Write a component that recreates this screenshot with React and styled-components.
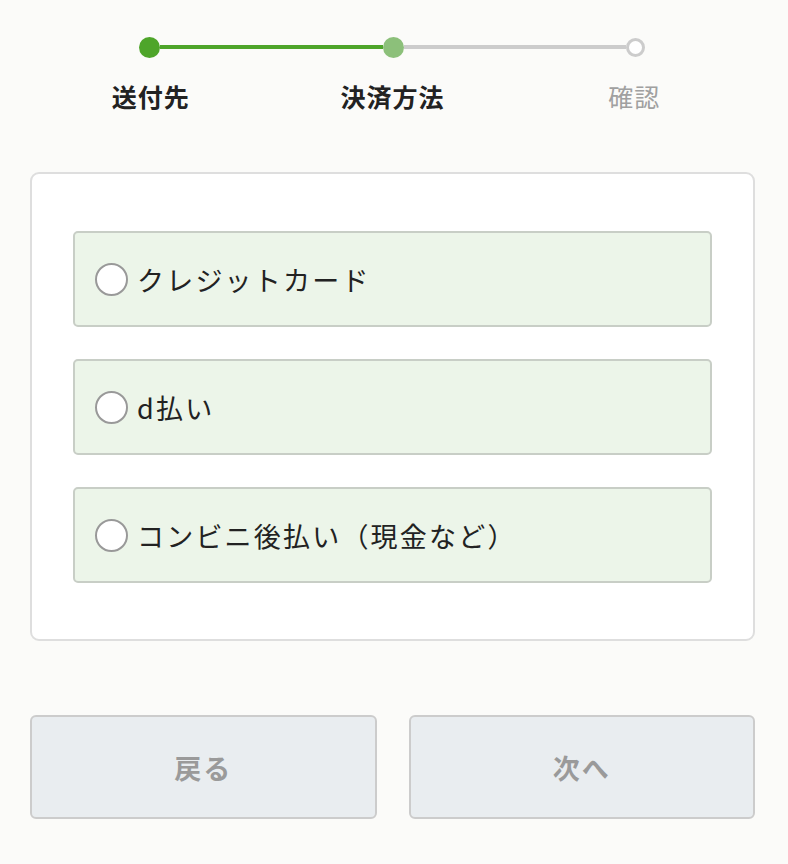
import React, { useState } from "react";
import styled, { createGlobalStyle } from "styled-components";

const GlobalStyle = createGlobalStyle`
  body {
    margin: 0;
    background: #fbfbf9;
    font-family: "Noto Sans CJK JP", "Noto Sans", sans-serif;
  }
`;

const StyledPage = styled.div`
  width: 725px;
  margin-left: 30px;
  padding-top: 36px;
  padding-bottom: 40px;
`;

const StyledTrack = styled.div`
  display: flex;
  align-items: center;
  padding: 0 110px 0 109px;
  height: 22px;
`;

const StyledDot = styled.span`
  flex: none;
  box-sizing: border-box;
  width: ${(p) => (p.$state === "todo" ? 19 : 21)}px;
  height: ${(p) => (p.$state === "todo" ? 19 : 21)}px;
  border-radius: 50%;
  background: ${(p) =>
    p.$state === "done" ? "#4ea52a" : p.$state === "current" ? "#8cc07a" : "#fff"};
  border: ${(p) => (p.$state === "todo" ? "3px solid #cccccc" : "none")};
`;

const StyledLine = styled.span`
  flex: 1;
  height: 4px;
  background: ${(p) => (p.$done ? "#4ea52a" : "#cccccc")};
`;

const StyledLabels = styled.div`
  display: grid;
  grid-template-columns: repeat(3, 1fr);
  margin-top: 23px;
`;

const StyledLabel = styled.div`
  text-align: center;
  font-size: 25px;
  line-height: 30px;
  font-weight: ${(p) => (p.$muted ? 400 : 700)};
  color: ${(p) => (p.$muted ? "#a0a0a0" : "#222")};
  letter-spacing: 1px;
`;

const StyledCard = styled.div`
  margin-top: 61px;
  background: #fff;
  border: 2px solid #dedede;
  border-radius: 9px;
  padding: 57px 41px 56px;
  display: flex;
  flex-direction: column;
  gap: 32px;
`;

const StyledOption = styled.label`
  display: flex;
  align-items: center;
  gap: 9px;
  height: 96px;
  box-sizing: border-box;
  padding-left: 20px;
  background: #ecf5e9;
  border: 2px solid #c8cec6;
  border-radius: 5px;
  font-size: 27px;
  color: #222;
  letter-spacing: 2.2px;
  cursor: pointer;
`;

const StyledRadio = styled.span`
  flex: none;
  box-sizing: border-box;
  width: 33px;
  height: 33px;
  border-radius: 50%;
  background: #fff;
  border: 2px solid ${(p) => (p.$checked ? "#4ea52a" : "#999")};
  display: flex;
  align-items: center;
  justify-content: center;
  &::after {
    content: "";
    width: 15px;
    height: 15px;
    border-radius: 50%;
    background: ${(p) => (p.$checked ? "#4ea52a" : "transparent")};
  }
`;

const StyledButtons = styled.div`
  margin-top: 74px;
  display: grid;
  grid-template-columns: 1fr 1fr;
  gap: 32px;
`;

const StyledButton = styled.button`
  height: 104px;
  background: #e9edf0;
  border: 2px solid #cccccc;
  border-radius: 6px;
  font-family: inherit;
  font-size: 27px;
  font-weight: 700;
  color: #9a9a9a;
  letter-spacing: 2px;
  cursor: pointer;
`;

const options = ["クレジットカード", "d払い", "コンビニ後払い（現金など）"];

const App = () => {
  const [selected, setSelected] = useState(null);

  return (
    <>
      <GlobalStyle />
      <StyledPage>
        <StyledTrack>
          <StyledDot $state="done" />
          <StyledLine $done />
          <StyledDot $state="current" />
          <StyledLine />
          <StyledDot $state="todo" />
        </StyledTrack>
        <StyledLabels>
          <StyledLabel>送付先</StyledLabel>
          <StyledLabel>決済方法</StyledLabel>
          <StyledLabel $muted>確認</StyledLabel>
        </StyledLabels>

        <StyledCard>
          {options.map((o, i) => (
            <StyledOption key={o} onClick={() => setSelected(i)}>
              <StyledRadio $checked={selected === i} />
              {o}
            </StyledOption>
          ))}
        </StyledCard>

        <StyledButtons>
          <StyledButton>戻る</StyledButton>
          <StyledButton>次へ</StyledButton>
        </StyledButtons>
      </StyledPage>
    </>
  );
};

export default App;
